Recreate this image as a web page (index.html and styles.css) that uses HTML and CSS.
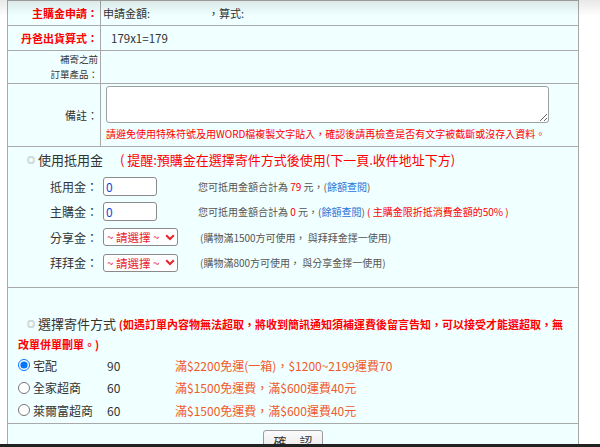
FILE: index.html
```html
<!DOCTYPE html>
<html lang="zh-Hant">
<head>
<meta charset="utf-8">
<title>訂單</title>
<link rel="stylesheet" href="styles.css">
</head>
<body>
<div class="page">
  <div class="form">
    <div class="cell lbl red bold r1">主購金申請：</div>
    <div class="cell val r1">申請金額:<span class="gap"></span>，算式:</div>

    <div class="cell lbl red bold r2">丹爸出貨算式：</div>
    <div class="cell val calc r2">179x1=179</div>

    <div class="cell lbl tiny r3">補寄之前<br>訂單產品：</div>
    <div class="cell val r3"></div>

    <div class="cell lbl r4">備註：</div>
    <div class="cell memo r4">
      <textarea class="memo-box"></textarea>
      <div class="memo-note">請避免使用特殊符號及用WORD檔複製文字貼入，確認後請再檢查是否有文字被截斷或沒存入資料。</div>
    </div>

    <div class="cell wide credit">
      <div class="head"><span class="mark">◎</span> 使用抵用金<span class="remind">( 提醒:預購金在選擇寄件方式後使用(下一頁.收件地址下方)</span></div>
      <div class="crow c1">
        <span class="clbl">抵用金：</span>
        <span class="ctrl"><span class="inbox">0</span></span>
        <span class="desc">您可抵用金額合計為 <span class="red">79</span> 元，(<span class="link">餘額查閱</span>)</span>
      </div>
      <div class="crow c2">
        <span class="clbl">主購金：</span>
        <span class="ctrl"><span class="inbox">0</span></span>
        <span class="desc">您可抵用金額合計為 <span class="red">0</span> 元，(<span class="link">餘額查閱</span>) <span class="red">( 主購金限折抵消費金額的50% )</span></span>
      </div>
      <div class="crow c3">
        <span class="clbl">分享金：</span>
        <span class="ctrl"><span class="sel">~ 請選擇 ~<svg class="chev" width="10" height="7" viewBox="0 0 10 7"><path d="M1.2 1.2 L5 5 L8.8 1.2" fill="none" stroke="#e8242a" stroke-width="2"/></svg></span></span>
        <span class="desc sdesc">(購物滿1500方可使用， 與拜拜金擇一使用)</span>
      </div>
      <div class="crow c4">
        <span class="clbl">拜拜金：</span>
        <span class="ctrl"><span class="sel">~ 請選擇 ~<svg class="chev" width="10" height="7" viewBox="0 0 10 7"><path d="M1.2 1.2 L5 5 L8.8 1.2" fill="none" stroke="#e8242a" stroke-width="2"/></svg></span></span>
        <span class="desc sdesc">(購物滿800方可使用， 與分享金擇一使用)</span>
      </div>
    </div>

    <div class="cell wide ship">
      <p class="shead"><span class="mark">◎</span> 選擇寄件方式 <span class="warn">(如遇訂單內容物無法超取，將收到簡訊通知須補運費後留言告知，可以接受才能選超取，無</span><br><span class="warn">改單併單刪單。)</span></p>
      <label class="srow">
        <input type="radio" name="ship" checked>
        <span class="sname">宅配</span>
        <span class="sfee">90</span>
        <span class="snote">滿$2200免運(一箱)，$1200~2199運費70</span>
      </label>
      <label class="srow">
        <input type="radio" name="ship">
        <span class="sname">全家超商</span>
        <span class="sfee">60</span>
        <span class="snote">滿$1500免運費，滿$600運費40元</span>
      </label>
      <label class="srow">
        <input type="radio" name="ship">
        <span class="sname">萊爾富超商</span>
        <span class="sfee">60</span>
        <span class="snote">滿$1500免運費，滿$600運費40元</span>
      </label>
    </div>

    <div class="cell wide btnrow">
      <button class="ok" type="button">確　認</button>
    </div>
  </div>
</div>
<div class="topshade"></div>
<div class="bottombar"></div>
</body>
</html>
```

FILE: styles.css
```css
* { box-sizing: border-box; }
html, body { margin: 0; padding: 0; background: #fff; }
body {
  font-family: "Noto Sans CJK TC", "Noto Sans", sans-serif;
  color: #333;
  overflow: hidden;
}
.page { padding-left: 7px; }

.form {
  width: 572px;
  display: grid;
  grid-template-columns: 93px 1fr;
  border: 1px solid #a9a9a9;
  border-bottom: none;
  background: #f0ffff;
}
.cell { border-bottom: 1px solid #a9a9a9; }
.wide { grid-column: 1 / -1; }

.r1, .r2 { height: 25px; }
.r3 { height: 33px; }
.r4 { height: 63px; }

.lbl {
  border-right: 1px solid #a9a9a9;
  display: flex;
  align-items: center;
  justify-content: flex-end;
  text-align: right;
  padding-right: 2px;
  font-size: 11px;
  line-height: 14px;
}
.red { color: #f00; }
.bold { font-weight: bold; }
.tiny { font-size: 9.5px; line-height: 15px; padding-right: 2px; }

.val {
  display: flex;
  align-items: center;
  padding-left: 2px;
  font-size: 11px;
  color: #333;
}
.gap { display: inline-block; width: 58px; }
.calc { padding-left: 10px; font-size: 11.5px; }

.memo { padding: 2px 0 0 5px; }
.memo-box {
  display: block;
  width: 443px;
  height: 37px;
  margin: 0;
  border: 1px solid #a0a0a0;
  border-radius: 3px;
  background: #fff;
  resize: both;
}
.memo-note {
  margin-top: 4px;
  font-size: 10px;
  line-height: 13px;
  color: #f00;
  white-space: nowrap;
}

/* credit section */
.credit { height: 141px; padding: 4px 0 0 10px; }
.head {
  height: 18px;
  line-height: 18px;
  font-size: 13px;
  color: #333;
  text-indent: 9px;
  white-space: nowrap;
  margin-bottom: 5px;
}
.mark { font-size: 8px; color: #888; vertical-align: 2px; }
.remind { color: #f00; margin-left: 17px; }

.crow {
  display: grid;
  grid-template-columns: 80px 100px 1fr;
  align-items: center;
  height: 25px;
}
.c3 { height: 26px; }
.clbl { font-size: 12px; text-align: right; padding-right: 0; color: #333; }
.ctrl { padding-left: 5px; display: flex; align-items: center; }
.inbox {
  display: block;
  width: 54px;
  height: 19px;
  border: 1px solid #8a8a8a;
  border-radius: 3px;
  background: #fff;
  font-size: 12px;
  line-height: 17px;
  padding-left: 2px;
  color: #1446d8;
}
.sel {
  display: flex;
  align-items: center;
  width: 75px;
  height: 18px;
  border: 1px solid #8a8a8a;
  border-radius: 3px;
  background: #fff;
  font-size: 11.5px;
  line-height: 16px;
  color: #e8242a;
  padding-left: 3px;
  white-space: nowrap;
}
.chev { margin-left: 6px; }
.desc { font-size: 10px; color: #555; white-space: nowrap; }
.sdesc { padding-left: 2px; }
.link { color: #2a72d8; }

/* shipping */
.ship { height: 136px; padding: 26px 0 0 10px; }
.shead {
  margin: 0;
  font-size: 13px;
  line-height: 19px;
  text-indent: 9px;
  color: #333;
  white-space: nowrap;
}
.warn { color: #f00; font-weight: bold; font-size: 11px; }
.srow {
  display: grid;
  grid-template-columns: 15px 74px 68px 1fr;
  align-items: center;
  height: 22px;
  font-size: 12px;
  color: #333;
}
.srow:nth-of-type(2) { height: 23px; }
.srow input {
  margin: 0;
  width: 12px;
  height: 12px;
}
.sname { white-space: nowrap; }
.snote { color: #f15a29; white-space: nowrap; }

.btnrow { height: 30px; border-bottom: none; display: flex; justify-content: center; padding-top: 6px; }
.ok {
  width: 60px;
  height: 24px;
  margin: 0;
  padding: 0;
  border: 1px solid #9a9a9a;
  border-radius: 3px;
  background: linear-gradient(#fbfbfb, #e6e6e6);
  font-family: inherit;
  font-size: 13px;
  line-height: 20px;
  color: #333;
}

.topshade {
  position: fixed;
  left: 0; top: 0; right: 0;
  height: 16px;
  background: linear-gradient(rgba(0,0,0,0.09), rgba(0,0,0,0));
  pointer-events: none;
}
.bottombar {
  position: fixed;
  left: 0; right: 0; bottom: 0;
  height: 3px;
  background: #222;
}
```
